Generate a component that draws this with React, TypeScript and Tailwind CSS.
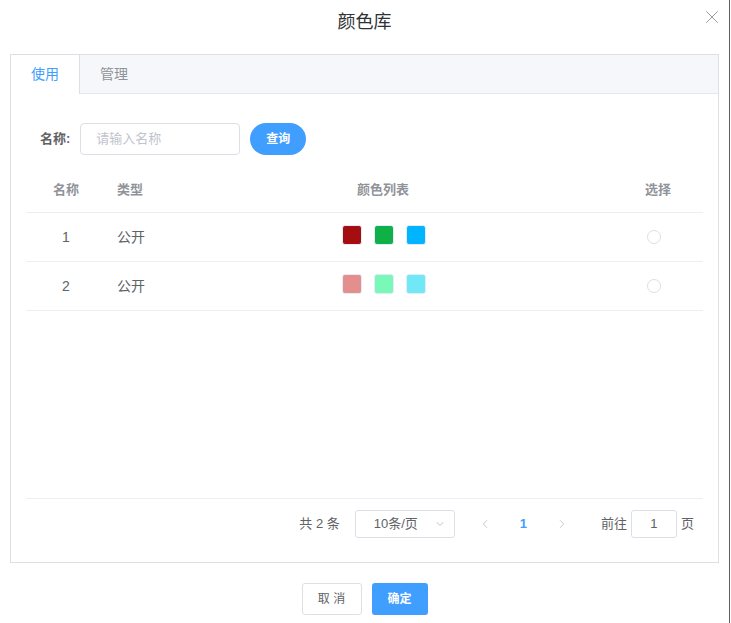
import { X, ChevronDown, ChevronLeft, ChevronRight } from "lucide-react"

const font = { fontFamily: '"Liberation Sans", "Noto Sans CJK SC", sans-serif' }

const rows = [
	{ id: 1, type: "公开", colors: ["#a50e10", "#10b048", "#00b4ff"] },
	{ id: 2, type: "公开", colors: ["#e58e8e", "#7af8b8", "#70e8f8"] },
]

export default function App() {
	return (
		<div className="w-[731px] h-[623px] flex bg-white" style={font}>
			<div className="w-[729px] flex flex-col">
				<div className="relative h-[44px] flex items-center justify-center text-[18px] text-[#303133]">
					颜色库
					<X className="absolute right-[6px] top-[6px] text-[#909399]" size={22} strokeWidth={1} />
				</div>

				<div className="mx-[10px] mt-[10px] h-[509px] border border-[#dcdfe6] flex flex-col">
					<div className="h-[39px] flex bg-[#f5f7fa] border-b border-[#e4e7ed]">
						<div className="w-[69px] h-[39px] bg-white border-r border-[#dcdfe6] flex items-center justify-center text-[14px] text-[#409eff]">
							使用
						</div>
						<div className="px-[20px] flex items-center text-[14px] text-[#909399]">管理</div>
					</div>

					<div className="flex-1 px-[15px] pt-[29px] flex flex-col">
						<div className="flex items-center pl-[14px]">
							<span className="text-[13px] font-bold text-[#606266]">名称:</span>
							<div className="ml-[10px] w-[160px] h-[32px] border border-[#dcdfe6] rounded-[4px] flex items-center pl-[15px] text-[13px] text-[#c0c4cc]">
								请输入名称
							</div>
							<button className="ml-[10px] w-[56px] h-[32px] rounded-full bg-[#409eff] text-white text-[12px] font-bold">
								查询
							</button>
						</div>

						<div className="mt-[13px] h-[330px] flex flex-col">
							<div className="h-[45px] grid grid-cols-[80px_100px_1fr_90px] items-center border-b border-[#ebeef5] text-[13px] font-bold text-[#909399]">
								<div className="text-center">名称</div>
								<div className="pl-[11px]">类型</div>
								<div className="pl-[151px]">颜色列表</div>
								<div className="pl-[32px]">选择</div>
							</div>
							{rows.map((r) => (
								<div
									key={r.id}
									className="h-[49px] grid grid-cols-[80px_100px_1fr_90px] items-center border-b border-[#ebeef5] text-[14px] text-[#606266]"
								>
									<div className="text-center">{r.id}</div>
									<div className="pl-[11px]">{r.type}</div>
									<div className="pl-[136px] flex gap-[12px] -mt-[5px]">
										{r.colors.map((c) => (
											<span
												key={c}
												className="w-[20px] h-[20px] rounded-[3px] border border-[#e3ecf8]"
												style={{ backgroundColor: c }}
											/>
										))}
									</div>
									<div className="pl-[34px]">
										<span className="block w-[14px] h-[14px] rounded-full border border-[#dcdfe6]" />
									</div>
								</div>
							))}
						</div>

						<div className="border-t border-[#ebeef5] pt-[11px] flex items-center justify-end pr-[9px] text-[13px] text-[#606266]">
							<span>共 2 条</span>
							<div className="ml-[15px] w-[100px] h-[28px] border border-[#dcdfe6] rounded-[3px] flex items-center pl-[18px] pr-[8px] justify-between">
								<span>10条/页</span>
								<ChevronDown size={12} className="text-[#c0c4cc]" />
							</div>
							<ChevronLeft size={14} strokeWidth={1.5} className="ml-[23px] text-[#c0c4cc]" />
							<span className="ml-[28px] font-bold text-[#409eff]">1</span>
							<ChevronRight size={14} strokeWidth={1.5} className="ml-[28px] text-[#c0c4cc]" />
							<span className="ml-[32px]">前往</span>
							<div className="ml-[4px] w-[46px] h-[28px] border border-[#dcdfe6] rounded-[3px] flex items-center justify-center">
								1
							</div>
							<span className="ml-[4px]">页</span>
						</div>
					</div>
				</div>

				<div className="mt-[20px] flex justify-center gap-[10px]">
					<button className="w-[60px] h-[32px] border border-[#dcdfe6] rounded-[3px] bg-white text-[12px] text-[#606266]">
						取 消
					</button>
					<button className="w-[56px] h-[32px] rounded-[3px] bg-[#409eff] text-[12px] text-white font-bold">
						确定
					</button>
				</div>
			</div>
			<div className="w-px h-full bg-[#5c5c5c]" />
			<div className="w-px h-full bg-white" />
		</div>
	)
}
